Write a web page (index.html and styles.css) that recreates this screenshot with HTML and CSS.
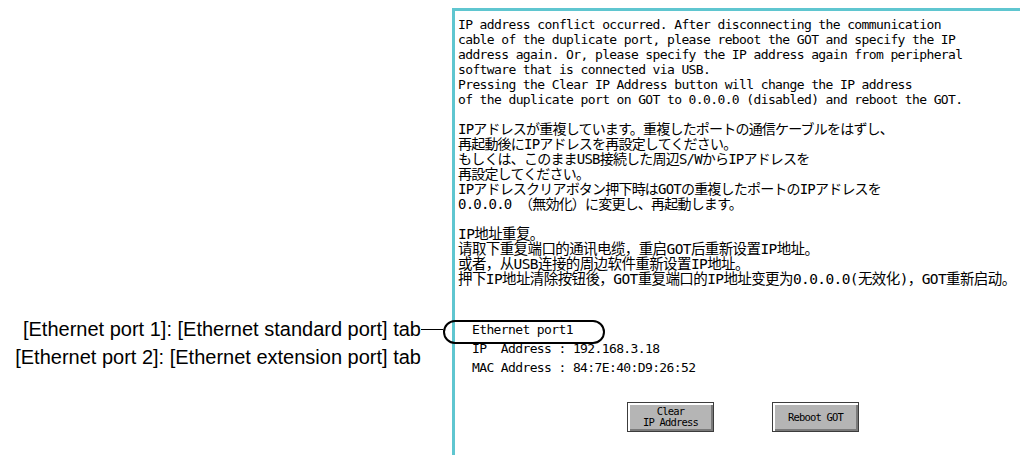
FILE: index.html
```html
<!DOCTYPE html>
<html lang="en">
<head>
  <meta charset="UTF-8">
  <meta name="viewport" content="width=device-width, initial-scale=1.0">
  <title>IP Address Conflict</title>
  <link rel="stylesheet" href="styles.css">
</head>
<body>

  <div class="page">
    <div class="captions">
      <div class="caption caption-linked">[Ethernet port 1]: [Ethernet standard port] tab</div>
      <div class="caption">[Ethernet port 2]: [Ethernet extension port] tab</div>
    </div>

    <div class="screen">
      <p class="msg">IP address conflict occurred. After disconnecting the communication<br>
cable of the duplicate port, please reboot the GOT and specify the IP<br>
address again. Or, please specify the IP address again from peripheral<br>
software that is connected via USB.<br>
Pressing the Clear IP Address button will change the IP address<br>
of the duplicate port on GOT to 0.0.0.0 (disabled) and reboot the GOT.</p>

      <p class="msg msg-jp">IPアドレスが重複しています。重複したポートの通信ケーブルをはずし、<br>
再起動後にIPアドレスを再設定してください。<br>
もしくは、このままUSB接続した周辺S/WからIPアドレスを<br>
再設定してください。<br>
IPアドレスクリアボタン押下時はGOTの重複したポートのIPアドレスを<br>
0.0.0.0 （無効化）に変更し、再起動します。</p>

      <p class="msg msg-cn">IP地址重复。<br>
请取下重复端口的通讯电缆，重启GOT后重新设置IP地址。<br>
或者，从USB连接的周边软件重新设置IP地址。<br>
押下IP地址清除按钮後，GOT重复端口的IP地址变更为0.0.0.0(无效化)，GOT重新启动。</p>

      <div class="port-info">
        <div class="port-row"><span class="tab-name">Ethernet port1</span></div>
        <div class="port-row">IP  Address : 192.168.3.18</div>
        <div class="port-row">MAC Address : 84:7E:40:D9:26:52</div>
      </div>

      <div class="actions">
        <button class="got-btn">Clear<br>IP Address</button>
        <button class="got-btn">Reboot GOT</button>
      </div>
    </div>
  </div>

</body>
</html>
```

FILE: styles.css
```css
body {
  margin: 0;
  background: #fff;
  color: #000;
}

.page {
  display: flex;
  width: 1020px;
  height: 455px;
  overflow: hidden;
}

.captions {
  width: 452px;
  flex-shrink: 0;
  padding: 315px 31px 0 0;
  box-sizing: border-box;
  text-align: right;
  font-family: "Liberation Sans", Arial, sans-serif;
  font-size: 20px;
}

.caption {
  line-height: 28px;
  white-space: nowrap;
}

.caption-linked {
  position: relative;
}

/* leader line from the caption to the tab */
.caption-linked::after {
  content: "";
  position: absolute;
  left: 100%;
  top: 14px;
  width: 22px;
  border-top: 1px solid #000;
}

.screen {
  flex: 1;
  margin-top: 8px;
  border-top: 3px solid #5fc6d0;
  border-left: 3px solid #5fc6d0;
  padding: 6px 0 0 3px;
  font-family: "DejaVu Sans Mono", monospace;
  font-size: 13px;
  letter-spacing: -0.62px;
}

.msg {
  margin: 0 0 15px;
  line-height: 15px;
  white-space: nowrap;
}

.msg-jp {
  font-family: "DejaVu Sans Mono", "Noto Sans CJK JP", monospace;
  font-size: 14px;
  letter-spacing: -0.8px;
}

.msg-cn {
  font-family: "DejaVu Sans Mono", "Noto Sans CJK SC", monospace;
  font-size: 14.5px;
  letter-spacing: -0.6px;
}

.port-info {
  margin-top: 33px;
  padding-left: 14px;
}

.port-row {
  line-height: 19px;
  white-space: pre;
}

.tab-name {
  position: relative;
}

/* rounded marker around the tab name */
.tab-name::before {
  content: "";
  position: absolute;
  left: -29px;
  top: -2px;
  width: 162px;
  height: 24px;
  box-sizing: border-box;
  border: 2px solid #000;
  border-radius: 12px;
}

.actions {
  display: flex;
  gap: 58px;
  margin-top: 25px;
  padding-left: 169px;
}

.got-btn {
  width: 87px;
  height: 30px;
  padding: 0;
  background: #b5b5b5;
  border: 1px solid #3c3c3c;
  box-shadow: inset 2px 2px 0 #fff, inset -2px -2px 0 #7a7a7a;
  font-family: "DejaVu Sans Mono", monospace;
  font-size: 10.5px;
  letter-spacing: -0.8px;
  line-height: 11px;
  color: #000;
}
```
